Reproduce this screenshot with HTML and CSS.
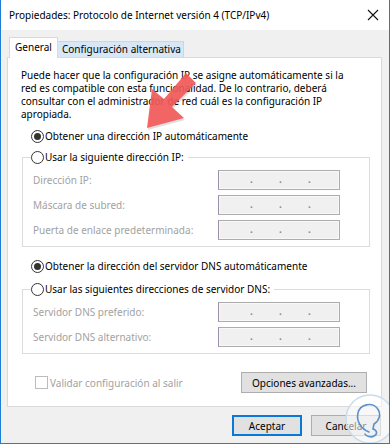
FILE: index.html
```html
<!DOCTYPE html>
<html lang="es">
<head>
    <meta charset="UTF-8">
    <meta name="viewport" content="width=device-width, initial-scale=1.0">
    <link rel="stylesheet" href="styles.css">
    <title>Propiedades: Protocolo de Internet versión 4 (TCP/IPv4)</title>
</head>
<body>
    <div class="window">
        <div class="titlebar">
            <span class="title">Propiedades: Protocolo de Internet versión 4 (TCP/IPv4)</span>
            <svg class="close" width="12" height="12" viewBox="0 0 12 12">
                <path d="M1 1 L11 11 M11 1 L1 11" stroke="#111" stroke-width="1.1" fill="none"/>
            </svg>
        </div>

        <div class="client">
            <div class="tabs">
                <div class="tab tab-active">General</div>
                <div class="tab tab-hover">Configuración alternativa</div>
            </div>

            <div class="panel">
                <p class="intro">
                    Puede hacer que la configuración IP se asigne automáticamente si la<br>
                    red es compatible con esta funcionalidad. De lo contrario, deberá<br>
                    consultar con el administrador de red cuál es la configuración IP<br>
                    apropiada.
                </p>

                <div class="option option-first"><span class="radio checked"></span>Obtener una dirección IP automáticamente</div>

                <fieldset class="group">
                    <legend class="option"><span class="radio"></span>Usar la siguiente dirección IP:</legend>
                    <div class="fields">
                        <span class="field-label">Dirección IP:</span>
                        <span class="ip-box"><i>.</i><i>.</i><i>.</i></span>
                        <span class="field-label">Máscara de subred:</span>
                        <span class="ip-box"><i>.</i><i>.</i><i>.</i></span>
                        <span class="field-label">Puerta de enlace predeterminada:</span>
                        <span class="ip-box"><i>.</i><i>.</i><i>.</i></span>
                    </div>
                </fieldset>

                <div class="option option-dns"><span class="radio checked"></span>Obtener la dirección del servidor DNS automáticamente</div>

                <fieldset class="group group-dns">
                    <legend class="option"><span class="radio"></span>Usar las siguientes direcciones de servidor DNS:</legend>
                    <div class="fields">
                        <span class="field-label">Servidor DNS preferido:</span>
                        <span class="ip-box"><i>.</i><i>.</i><i>.</i></span>
                        <span class="field-label">Servidor DNS alternativo:</span>
                        <span class="ip-box"><i>.</i><i>.</i><i>.</i></span>
                    </div>
                </fieldset>

                <div class="panel-footer">
                    <div class="check"><span class="checkbox"></span>Validar configuración al salir</div>
                    <button class="btn btn-advanced">Opciones avanzadas...</button>
                </div>
            </div>

            <div class="dialog-buttons">
                <button class="btn btn-default">Aceptar</button>
                <button class="btn">Cancelar</button>
            </div>
        </div>

        <!-- flecha roja de la captura -->
        <svg class="arrow" width="390" height="444" viewBox="0 0 390 444">
            <polygon points="196,83 186,73 164,99 152,89 147,128 184,118 172,107" fill="#000" opacity="0.12" transform="translate(1,2)"/>
            <polygon points="196,83 186,73 164,99 152,89 147,128 184,118 172,107" fill="#f25a5a" opacity="0.92"/>
        </svg>

        <!-- marca de agua -->
        <svg class="watermark" width="56" height="56" viewBox="0 0 56 56">
            <circle cx="28" cy="28" r="24" fill="#fff" fill-opacity="0.55" stroke="#c9dcee" stroke-width="1.5"/>
            <path d="M27 41 C 19 38, 14 30, 16 22 C 18 13, 30 11, 35 17 C 40 23, 37 30, 32 33 L 31 38 C 35 39, 36 43, 32 45 C 29 47, 24 45, 23 43" fill="none" stroke="#5d90cc" stroke-width="1.6" stroke-linecap="round"/>
        </svg>
    </div>
</body>
</html>
```

FILE: styles.css
```css
body {
    margin: 0;
    padding: 0;
    background-color: #fff;
    font-family: "Noto Sans", "Open Sans", sans-serif;
    font-size: 10px;
    color: #000;
}

.window {
    position: relative;
    width: 390px;
    height: 444px;
    box-sizing: border-box;
    border: 1px solid #1a7fd5;
    border-top: none;
    display: flex;
    flex-direction: column;
    background-color: #f0f0f0;
    overflow: hidden;
}

.titlebar {
    height: 30px;
    background-color: #fff;
    display: flex;
    align-items: center;
    justify-content: space-between;
    padding: 0 10px 0 8px;
    flex-shrink: 0;
}

.title {
    font-size: 10px;
    white-space: nowrap;
}

.client {
    flex: 1;
    padding: 7px 7px 0 6px;
}

.tabs {
    display: flex;
    align-items: flex-end;
    height: 20px;
    margin-left: 2px;
    position: relative;
    z-index: 1;
}

.tab {
    box-sizing: border-box;
    border: 1px solid #d9d9d9;
    border-bottom: none;
    line-height: 15px;
    white-space: nowrap;
}

.tab-active {
    background-color: #fff;
    height: 21px;
    width: 49px;
    margin-bottom: -1px;
    padding-top: 2px;
    text-align: center;
}

.tab-hover {
    background-color: #d8e7f5;
    border-color: #c2d8ec;
    border-left: none;
    height: 16px;
    width: 126px;
    padding-left: 4px;
}

.panel {
    background-color: #fff;
    border: 1px solid #d9d9d9;
    padding: 11px 11px 13px 13px;
}

.intro {
    margin: 0;
    line-height: 13px;
    white-space: nowrap;
}

.option {
    display: flex;
    align-items: center;
    height: 14px;
    line-height: 14px;
    white-space: nowrap;
}

.option-first {
    margin-top: 8px;
}

.option-dns {
    margin-top: 12px;
}

.radio {
    width: 11px;
    height: 11px;
    border: 1px solid #333;
    border-radius: 50%;
    background-color: #fff;
    margin: 0 1px 0 10px;
    display: flex;
    align-items: center;
    justify-content: center;
    flex-shrink: 0;
}

.radio.checked::after {
    content: "";
    width: 7px;
    height: 7px;
    border-radius: 50%;
    background-color: #333;
}

.group {
    margin: 7px 0 0 1px;
    padding: 6px 10px 6px 10px;
    border: 1px solid #dcdcdc;
    min-width: 0;
}

.group legend {
    padding: 0 4px 0 0;
    margin-left: -2px;
}

.group legend .radio {
    margin-left: 0;
}

.group-dns {
    margin-top: 9px;
}

.fields {
    display: grid;
    grid-template-columns: 185px 122px;
    grid-auto-rows: 20px;
    row-gap: 5px;
    align-items: center;
}

.field-label {
    color: #a2a2a2;
    white-space: nowrap;
}

.ip-box {
    box-sizing: border-box;
    height: 20px;
    border: 1px solid #adadad;
    border-left-color: #9a8ea8;
    background-color: #f0f0f0;
    box-shadow: inset 0 0 0 1px #f8f8f8;
    display: flex;
    padding-left: 31px;
    gap: 26px;
}

.ip-box i {
    font-style: normal;
    color: #8a8a8a;
    font-weight: bold;
    line-height: 17px;
    width: 3px;
}

.panel-footer {
    display: flex;
    align-items: center;
    justify-content: space-between;
    margin-top: 18px;
    height: 21px;
}

.check {
    display: flex;
    align-items: center;
    color: #a2a2a2;
    margin-left: 14px;
    white-space: nowrap;
}

.checkbox {
    width: 11px;
    height: 11px;
    border: 1px solid #bcbcbc;
    background-color: #fff;
    margin-right: 2px;
}

.btn {
    font-family: inherit;
    font-size: 10px;
    color: #000;
    background-color: #e1e1e1;
    border: 1px solid #adadad;
    height: 21px;
    width: 70px;
    padding: 0;
    margin: 0;
    line-height: 18px;
}

.btn-advanced {
    width: 126px;
    margin-right: 3px;
}

.dialog-buttons {
    display: flex;
    justify-content: flex-end;
    gap: 9px;
    margin-top: 8px;
    padding-right: 1px;
}

.btn-default {
    border: 2px solid #0a78d7;
}

.arrow {
    position: absolute;
    left: -1px;
    top: 0;
    pointer-events: none;
}

.watermark {
    position: absolute;
    left: 341px;
    top: 391px;
    pointer-events: none;
}
```
